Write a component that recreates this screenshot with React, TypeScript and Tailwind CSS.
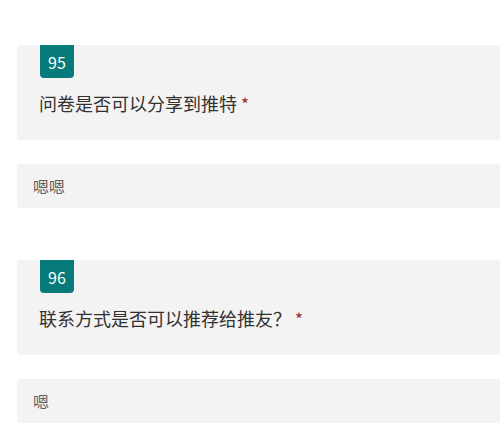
import React from 'react';

const items = [
  { no: '95', question: '问卷是否可以分享到推特', answer: '嗯嗯' },
  { no: '96', question: '联系方式是否可以推荐给推友？', answer: '嗯' },
];

const App: React.FC = () => {
  return (
    <div
      className="w-[500px] h-[448px] overflow-hidden bg-white pt-[45px] pl-[17px]"
      style={{ fontFamily: '"Microsoft YaHei", "Noto Sans CJK SC", "Noto Sans", sans-serif' }}
    >
      {items.map((item, i) => (
        <div key={item.no} className={i === 0 ? '' : 'mt-[52px]'}>
          <div className="bg-[#f3f3f3] rounded-l-[4px] h-[95px]">
            <div className="ml-[23px] w-[34px] h-[33px] bg-[#077a7c] rounded-b-[4px] flex items-center justify-center text-white text-[16px]">
              {item.no}
            </div>
            <div className="ml-[22px] mt-[12px] text-[18px] leading-[26px] text-[#323130]">
              {item.question}
              <span className="text-[#a4262c] ml-[4px] text-[17px]">*</span>
            </div>
          </div>
          <div className="mt-[24px] bg-[#f3f3f3] rounded-l-[4px] h-[44px] flex items-center pl-[16px] text-[16px] text-[#605e5c]">
            {item.answer}
          </div>
        </div>
      ))}
    </div>
  );
};

export default App;
